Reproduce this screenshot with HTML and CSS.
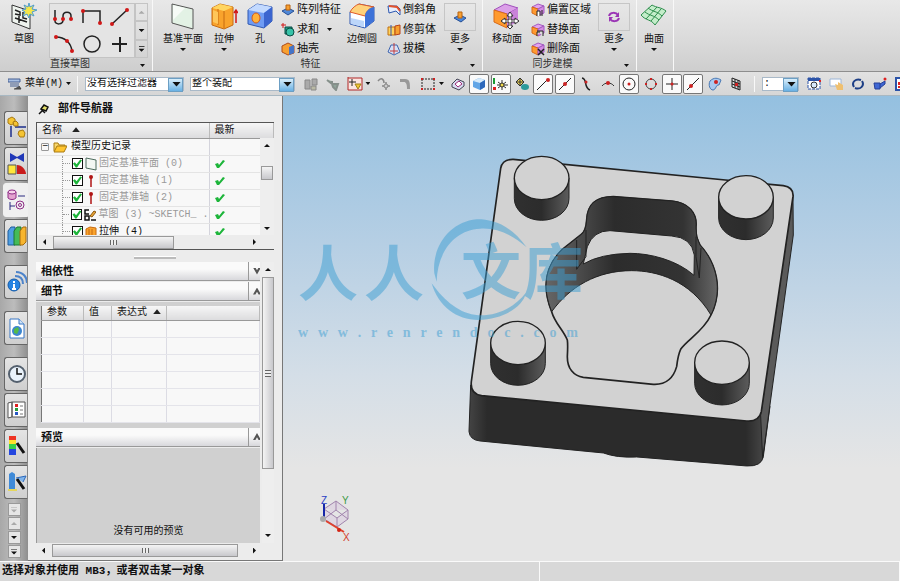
FILE: index.html
```html
<!DOCTYPE html>
<html lang="zh-CN">
  <head>
    <meta charset="UTF-8" />
    <meta name="viewport" content="width=device-width, initial-scale=1.0" />
    <title>部件导航器</title>
    <link rel="stylesheet" href="styles.css">
  </head>
  <body>
    <!-- shared shapes -->
    <svg class="defs" aria-hidden="true">
      <symbol id="tick" viewBox="0 0 12 10"><path d="M1 5l3-1 1 2 4-5 2 1-6 7H3z" fill="#1db53a" /></symbol>
      <symbol id="cube" viewBox="0 0 14 14">
        <path d="M1 4l6-3 6 2-6 3z" fill="#e3a3ee" stroke="#a25bc0" />
        <path d="M1 4l6 2v7l-6-3z" fill="#ff9a2e" stroke="#d76a18" />
        <path d="M7 6l6-3v7l-6 3z" fill="#d58be4" stroke="#a25bc0" />
      </symbol>
    </svg>

    <!-- Ribbon -->
    <header class="ribbon">
      <section class="group group-sketch">
        <div class="group-body">
          <button class="big">
            <svg width="26" height="27" viewBox="0 0 26 27"><path d="M1 2l18 6v18L1 19z" fill="#eef3ee" stroke="#333" /><path d="M4 7l5 2v3L4 11M12 9v6l4 1M4 15l12 4M8 13v7" fill="none" stroke="#222" stroke-width="1.5" /><path d="M18 0l1 4 4-2-2 4 5 1-5 2 2 4-4-2-1 4-2-4-4 2 2-4-3-2 4-1-2-4 4 2z" fill="#f4e64a" stroke="#4a9bd0" /></svg>
            <span>草图</span>
          </button>
          <div class="gallery">
            <button aria-label="轮廓"><svg width="22" height="20" viewBox="0 0 22 20"><path d="M2 3v11M2 14c0 4 8 4 8-1V9c0-5 8-5 8 0v4" fill="none" stroke="#222" stroke-width="1.5" /><g fill="#d01818"><circle cx="2" cy="12" r="2" /><circle cx="10" cy="12" r="2" /><circle cx="18" cy="12" r="2" /></g></svg></button>
            <button aria-label="矩形"><svg width="22" height="20" viewBox="0 0 22 20"><path d="M2 16V4h17v12" fill="none" stroke="#222" stroke-width="1.5" /><circle cx="2" cy="4" r="2" fill="#d01818" /><circle cx="19" cy="16" r="2" fill="#d01818" /></svg></button>
            <button aria-label="直线"><svg width="22" height="20" viewBox="0 0 22 20"><path d="M3 17L18 3" stroke="#222" stroke-width="1.5" /><circle cx="3" cy="17" r="2" fill="#d01818" /><circle cx="18" cy="3" r="2" fill="#d01818" /></svg></button>
            <button aria-label="圆弧"><svg width="22" height="20" viewBox="0 0 22 20"><path d="M3 3c9 0 15 6 16 14" fill="none" stroke="#222" stroke-width="1.5" /><g fill="#d01818"><circle cx="3" cy="3" r="2" /><circle cx="14" cy="7" r="2" /><circle cx="19" cy="17" r="2" /></g></svg></button>
            <button aria-label="圆"><svg width="22" height="20" viewBox="0 0 22 20"><circle cx="11" cy="10" r="8" fill="none" stroke="#222" stroke-width="1.5" /></svg></button>
            <button aria-label="点"><svg width="22" height="20" viewBox="0 0 22 20"><path d="M3 10h15M11 3v15" stroke="#222" stroke-width="2" /></svg></button>
          </div>
          <div class="gallery-scroll">
            <button aria-label="上" disabled><i class="caret up"></i></button>
            <button aria-label="下"><i class="caret"></i></button>
            <button aria-label="展开"><i class="caret bar"></i></button>
          </div>
        </div>
        <div class="caption">直接草图<i class="caret small"></i></div>
      </section>

      <section class="group group-feature">
        <div class="group-body">
          <button class="big wide">
            <svg width="24" height="27" viewBox="0 0 24 27"><path d="M1 1l21 5v20L1 20z" fill="#e3f2e5" stroke="#555" /><path d="M2 2l12 3-12 12z" fill="#fff" opacity=".7" /></svg>
            <span>基准平面</span><i class="caret"></i>
          </button>
          <button class="big">
            <svg width="28" height="27" viewBox="0 0 28 27"><path d="M2 5l8-4 13 3v18l-9 4-12-4z" fill="#f9a32c" stroke="#c66a10" /><path d="M2 5l8-4 13 3-9 4z" fill="#ffd560" /><path d="M14 8v17M8 6v16" stroke="#c66a10" /><path d="M3 7l5 2v12l-5-2z" fill="#ffc65a" /><path d="M26 7v13M24 10l2-3 2 3" stroke="#d01818" stroke-width="1.5" fill="none" /></svg>
            <span>拉伸</span><i class="caret"></i>
          </button>
          <button class="big">
            <svg width="26" height="27" viewBox="0 0 26 27"><path d="M1 7l9-6 15 3v14l-8 7-16-4z" fill="#6f9cf4" stroke="#3159b0" /><path d="M1 7l9-6 15 3-8 6z" fill="#c3daff" /><path d="M17 10l8-6v14l-8 7z" fill="#3b65cf" /><ellipse cx="9" cy="15" rx="4" ry="5" fill="#ffb13a" stroke="#d35a18" /></svg>
            <span>孔</span>
          </button>
          <div class="stack">
            <button><svg width="14" height="14" viewBox="0 0 14 14"><path d="M1 8l6-3 6 3-6 4z" fill="#5089d8" stroke="#274f94" /><path d="M5 2h4v5H5z" fill="#f7a030" stroke="#b86210" /></svg>阵列特征</button>
            <button><svg width="14" height="14" viewBox="0 0 14 14"><path d="M4 4h7v7H4z" fill="#1fa08b" stroke="#0c4d44" /><circle cx="9" cy="9" r="4" fill="#37c3a8" stroke="#0c4d44" /><path d="M0 2h5M2 0v5" stroke="#d01818" /></svg>求和<i class="caret small"></i></button>
            <button><svg width="14" height="14" viewBox="0 0 14 14"><path d="M1 4l6-3 6 3v7l-6 2-6-3z" fill="#f7a030" stroke="#b04a18" /><path d="M8 5l5-2v8l-5 2z" fill="#4474c8" /></svg>抽壳</button>
          </div>
          <button class="big">
            <svg width="28" height="27" viewBox="0 0 28 27"><path d="M2 9l9-8 15 3v14l-9 7-15-4z" fill="#fff" stroke="#2c57b0" /><path d="M2 9C4 5 8 2 11 1l15 3c-5 1-8 5-9 9z" fill="#ffd27a" stroke="#e05a28" /><path d="M17 12c1-4 4-7 9-8v14l-9 7z" fill="#3d72d8" /><path d="M3 15l13 3v6L3 21z" fill="#bcd6fa" /></svg>
            <span>边倒圆</span>
          </button>
          <div class="stack">
            <button><svg width="14" height="14" viewBox="0 0 14 14"><path d="M1 3h9l3 3v6l-4-4-7 2z" fill="#e7eefc" stroke="#2c57b0" /><path d="M2 3l8 1 3 4" stroke="#e2522b" stroke-width="2" fill="none" /></svg>倒斜角</button>
            <button><svg width="14" height="14" viewBox="0 0 14 14"><path d="M1 4h7v8H1z" fill="#ffd35c" stroke="#c07010" /><path d="M8 3l5-1v9l-5 1z" fill="#f7a030" stroke="#b84218" /><path d="M4 2v11" stroke="#3159b0" /></svg>修剪体</button>
            <button><svg width="14" height="14" viewBox="0 0 14 14"><path d="M4 3h6l3 7-6 3-6-3z" fill="#d5e1f7" stroke="#3c62ad" /><path d="M7 1v11M3 9h8" stroke="#c33a3a" /></svg>拔模</button>
          </div>
          <button class="big more">
            <span class="more-icon"><svg width="14" height="14" viewBox="0 0 14 14"><path d="M1 8l6-3 6 3-5 4z" fill="#4a86d8" stroke="#274f94" /><path d="M5 2h4v6H5z" fill="#f7a030" stroke="#b86210" /></svg></span>
            <span>更多</span><i class="caret"></i>
          </button>
        </div>
        <div class="caption center">特征<i class="caret small"></i></div>
      </section>

      <section class="group group-sync">
        <div class="group-body">
          <button class="big">
            <svg width="28" height="27" viewBox="0 0 28 27"><path d="M1 7l11-6 13 4-11 6z" fill="#dba0e8" stroke="#a04fbc" /><path d="M1 7l13 4v14L1 19z" fill="#ff9a2e" stroke="#d76a18" /><path d="M14 11l11-6v13l-11 7z" fill="#c982da" /><path d="M17 9l3 4h-2v4h4v-2l4 3-4 3v-2h-4v4h2l-3 3-3-3h2v-4h-4v2l-4-3 4-3v2h4v-4h-2z" fill="#fff" stroke="#333" /></svg>
            <span>移动面</span>
          </button>
          <div class="stack">
            <button><svg width="14" height="14" viewBox="0 0 14 14"><use href="#cube" /><path d="M6 13V8h3v5M11 7v6" stroke="#222" fill="#fff" /></svg>偏置区域</button>
            <button><svg width="14" height="14" viewBox="0 0 14 14"><use href="#cube" /><path d="M6 8h6v5M6 13V9h3" stroke="#222" fill="#ddd" /></svg>替换面</button>
            <button><svg width="14" height="14" viewBox="0 0 14 14"><use href="#cube" /><path d="M7 7l6 6M13 7l-6 6" stroke="#222" stroke-width="1.5" /></svg>删除面</button>
          </div>
          <button class="big more">
            <span class="more-icon"><svg width="14" height="14" viewBox="0 0 14 14"><path d="M2 6c1-4 7-4 9-1M12 8c-1 4-7 4-9 1" stroke="#9a35b5" stroke-width="2" fill="none" /><path d="M12 2v5H8zM2 12V7h4z" fill="#9a35b5" /></svg></span>
            <span>更多</span><i class="caret"></i>
          </button>
        </div>
        <div class="caption center">同步建模<i class="caret small"></i></div>
      </section>

      <section class="group group-surface">
        <div class="group-body">
          <button class="big">
            <svg width="28" height="27" viewBox="0 0 28 27"><path d="M1 12L12 2c5 3 9 2 14 6L15 22c-4-6-9-4-14-10z" fill="#c4edca" stroke="#2d8d4c" /><path d="M5 9c5 4 9 3 14 8M8 5c5 4 9 3 14 8M6 16L17 4M11 18L21 6" fill="none" stroke="#2d8d4c" /></svg>
            <span>曲面</span><i class="caret"></i>
          </button>
        </div>
      </section>
    </header>

    <!-- Selection bar -->
    <nav class="toolbar">
      <button class="menu-button">
        <svg width="14" height="14" viewBox="0 0 14 14"><path d="M0 2h12v3H0zM2 7h9M2 9h9" fill="#a9c0e4" stroke="#445f92" /><path d="M6 12h7l-2-3" fill="#555" stroke="#444" /></svg>
        菜单(M)<i class="caret small"></i>
      </button>
      <span class="divider"></span>
      <span class="combo"><select aria-label="选择过滤器"><option>没有选择过滤器</option></select></span>
      <span class="combo combo-scope"><select aria-label="选择范围"><option>整个装配</option></select></span>
      <div class="tools">
        <button aria-label="查找"><svg width="14" height="14" viewBox="0 0 14 14"><path d="M1 3h5v9H1zM8 2h5v6H8z" fill="#aaa" stroke="#888" /><path d="M7 9h5v4H7z" fill="#b9b9a4" stroke="#888" /></svg></button>
        <button aria-label="过滤"><svg width="14" height="14" viewBox="0 0 14 14"><path d="M1 3l5 4v-3M6 7h6l-2 6-3-3z" fill="#8fa59a" stroke="#86908b" stroke-width="2" /></svg></button>
        <button aria-label="捕捉"><svg width="16" height="14" viewBox="0 0 16 14"><path d="M1 0v13h14V1H1" fill="#fbe4e0" stroke="#b02828" /><path d="M2 5h7M5 2v7" stroke="#222" /><path d="M8 7h6l-3 5z" fill="#f2c432" stroke="#a08018" /></svg></button>
        <i class="caret small"></i>
        <button aria-label="移动"><svg width="14" height="14" viewBox="0 0 14 14"><path d="M1 4c3-4 6-2 6 2M5 9h8M9 5v8" fill="none" stroke="#888" stroke-width="1.5" /><circle cx="9" cy="9" r="2" fill="#ccc" stroke="#888" /></svg></button>
        <button aria-label="旋转"><svg width="14" height="14" viewBox="0 0 14 14"><path d="M1 2h5c5 0 5 4 5 10H8c0-5-1-7-3-7H1z" fill="#999" /></svg></button>
        <button aria-label="框选"><svg width="14" height="14" viewBox="0 0 14 14"><path d="M1 2h12v10H1z" fill="none" stroke="#222" stroke-dasharray="2 1" /><path d="M0 1h2v2H0zM12 1h2v2h-2zM0 11h2v2H0zM12 11h2v2h-2z" fill="#c22" /></svg></button>
        <i class="caret small"></i>
      </div>
      <div class="snap-tools">
        <button aria-label="线框"><svg width="14" height="14" viewBox="0 0 14 14"><path d="M1 7l5-5 7 3v4l-5 4-7-3z" fill="#d8dcf0" stroke="#445" /><path d="M4 7l4-3 3 3-4 3z" fill="#fff" stroke="#a02d7c" /></svg></button>
        <button class="on" aria-label="着色"><svg width="14" height="14" viewBox="0 0 14 14"><path d="M1 4l6-3 6 2v7l-5 3-7-3z" fill="#61a5e6" /><path d="M1 4l6-3 6 2-5 3z" fill="#d7ebfb" /><path d="M8 6l5-3v7l-5 3z" fill="#2c68bb" /></svg></button>
        <button class="on" aria-label="坐标"><svg width="16" height="14" viewBox="0 0 16 14"><path d="M1 1v6" stroke="#1a9b34" stroke-width="2" /><path d="M0 10h3v3H0z" fill="#d22" /><path d="M4 8h11M9 3v10M5 5l8 6M13 5l-8 6" stroke="#333" /><circle cx="9" cy="8" r="2" fill="#f4dc4c" stroke="#333" /></svg></button>
        <button aria-label="显示"><svg width="14" height="14" viewBox="0 0 14 14"><path d="M5 1l4 4-4 4-4-4z" fill="#f2d85b" stroke="#333" /><path d="M1 5h8M5 1v8" stroke="#333" /><ellipse cx="10" cy="10" rx="4" ry="3" fill="#2c9a9b" /></svg></button>
        <button class="on" aria-label="端点"><svg width="14" height="14" viewBox="0 0 14 14"><path d="M1 13L12 2" stroke="#222" /><circle cx="12" cy="3" r="2" fill="#c22" /></svg></button>
        <button class="on" aria-label="中点"><svg width="14" height="14" viewBox="0 0 14 14"><path d="M1 13L13 1" stroke="#222" /><circle cx="7" cy="7" r="2" fill="#c22" /></svg></button>
        <button aria-label="控制点"><svg width="14" height="14" viewBox="0 0 14 14"><path d="M3 1c6 1 1 9 8 12" fill="none" stroke="#222" stroke-width="1.5" /><circle cx="7" cy="5" r="1.5" fill="#c22" /></svg></button>
        <button aria-label="交点"><svg width="14" height="14" viewBox="0 0 14 14"><path d="M1 9c3-4 9-4 12 0" fill="none" stroke="#333" /><circle cx="7" cy="6" r="2" fill="#c22" /></svg></button>
        <button class="on" aria-label="圆心"><svg width="14" height="14" viewBox="0 0 14 14"><circle cx="7" cy="7" r="6" fill="none" stroke="#222" /><circle cx="7" cy="7" r="1.5" fill="#c22" /></svg></button>
        <button aria-label="象限点"><svg width="14" height="14" viewBox="0 0 14 14"><circle cx="7" cy="7" r="5" fill="none" stroke="#444" /><path d="M6 1h2v2H6zM6 11h2v2H6zM1 6h2v2H1zM11 6h2v2h-2z" fill="#c22" /></svg></button>
        <button class="on" aria-label="现有点"><svg width="14" height="14" viewBox="0 0 14 14"><path d="M1 7h12M7 1v12" stroke="#222" /><circle cx="7" cy="7" r="1.5" fill="#c22" /></svg></button>
        <button class="on" aria-label="曲线上的点"><svg width="14" height="14" viewBox="0 0 14 14"><path d="M1 13L13 1" stroke="#222" /><circle cx="5" cy="9" r="2" fill="#c22" /></svg></button>
        <button aria-label="面上的点"><svg width="14" height="14" viewBox="0 0 14 14"><path d="M2 4c4-4 8-3 11-1l-2 5c-3-1-3 5-6 5s-5-5-3-9z" fill="#a9c9ef" stroke="#4777b3" /><circle cx="8" cy="5" r="2" fill="#c22" /></svg></button>
        <button aria-label="网格点"><svg width="14" height="14" viewBox="0 0 14 14"><path d="M3 1l8 3v9l-8-3zM3 4l8 3M3 7l8 3M6 2v9M9 3v9" fill="none" stroke="#222" /><path d="M6 6h3v3H6z" fill="#c22" /></svg></button>
      </div>
      <span class="divider"></span>
      <span class="combo combo-short"><select aria-label="图层"><option>:</option></select></span>
      <div class="tools view-tools">
        <button aria-label="适合窗口"><svg width="14" height="14" viewBox="0 0 14 14"><path d="M1 1h12v11H1z" fill="#fff" stroke="#2b53a8" stroke-dasharray="3 1" /><path d="M1 1h12v3H1z" fill="#2b53a8" /><circle cx="7" cy="8" r="3" fill="#d7e8fa" stroke="#333" /><path d="M12 3h2v2h-2z" fill="#d22" /></svg></button>
        <button aria-label="平移"><svg width="14" height="14" viewBox="0 0 14 14"><path d="M1 2h11v7H1z" fill="#fff" stroke="#9cb6d8" /><path d="M6 7l3 1V5l5 3v5H8z" fill="#efc070" /></svg></button>
        <button aria-label="旋转视图"><svg width="14" height="14" viewBox="0 0 14 14"><path d="M3 10C0 5 5 1 10 3M11 4c3 5-2 9-7 7" stroke="#1d3f86" stroke-width="2" fill="none" /></svg></button>
        <button aria-label="透视"><svg width="14" height="14" viewBox="0 0 14 14"><path d="M1 6h6v6H2zM7 7l5-3v3l-5 4" fill="#3f67d4" stroke="#253f96" /><circle cx="12" cy="2" r="1.5" fill="#d22" /></svg></button>
        <button aria-label="布局"><svg width="14" height="14" viewBox="0 0 14 14"><path d="M1 1h12v12H1z" fill="#fff" stroke="#2b53a8" stroke-width="2" /><path d="M3 5h3v3H3zM3 9h3v2H3z" fill="#d22" /></svg></button>
      </div>
    </nav>

    <main class="workspace">
      <!-- Resource bar -->
      <aside class="rail">
        <button class="tab" aria-label="装配导航器"><svg width="20" height="24" viewBox="0 0 20 24"><path d="M4 10v11M8 11h11" stroke="#1c2f8c" stroke-width="1.5" /><g fill="#f5c433" stroke="#a87a12"><path d="M1 3l4-2 3 2v4l-4 2-3-2z" /><path d="M6 6l3-1 2 2v3H7z" /><path d="M12 15l4-1 2 3-1 4h-4l-2-3z" /></g></svg></button>
        <button class="tab" aria-label="约束导航器"><svg width="20" height="24" viewBox="0 0 20 24"><path d="M3 1l7 4 7-4v9l-7-4-7 4z" fill="#2038b8" /><path d="M1 13h8v9H1z" fill="#ffe63b" stroke="#555" /><path d="M10 13v9h9c0-4-4-9-9-9z" fill="#c91c1c" /></svg></button>
        <button class="tab active" aria-label="部件导航器"><svg width="20" height="24" viewBox="0 0 20 24"><path d="M2 4v6c2 2 6 2 8 0V4" fill="#e3a3cf" stroke="#8e2c86" /><ellipse cx="6" cy="4" rx="4" ry="2" fill="#f7d5ec" stroke="#8e2c86" /><path d="M12 8h7M4 14v8M4 18h5" stroke="#2b2b80" /><circle cx="14" cy="17" r="4" fill="none" stroke="#8e2c86" /><circle cx="14" cy="17" r="1.5" fill="none" stroke="#8e2c86" /></svg></button>
        <button class="tab gap-after" aria-label="重用库"><svg width="20" height="24" viewBox="0 0 20 24"><path d="M1 7l3-4h4v18H1z" fill="#4e9fe2" stroke="#205c9c" /><path d="M7 7l3-4h4v18H7z" fill="#45bb58" stroke="#1c7833" /><path d="M13 7l3-4h3v15l-3 3h-3z" fill="#f7b52f" stroke="#a56b0f" /></svg></button>
        <button class="tab gap-after" aria-label="HD3D 工具"><svg width="20" height="24" viewBox="0 0 20 24"><circle cx="7" cy="15" r="6" fill="#2684e2" stroke="#145aa8" /><path d="M7 11v2M7 14v5M5 19h4" stroke="#fff" stroke-width="2" /><path d="M8 6c5 0 8 3 8 8M9 2c7 0 11 5 11 11" fill="none" stroke="#4c83ca" stroke-width="2" /></svg></button>
        <button class="tab gap-after" aria-label="Web 浏览器"><svg width="20" height="24" viewBox="0 0 20 24"><path d="M3 3h9l5 5v14H3z" fill="#fff" stroke="#3a79c6" /><path d="M12 3v5h5" fill="#cfe3f7" stroke="#3a79c6" /><circle cx="10" cy="15" r="5" fill="#3c86cf" /><path d="M7 13l4-2 1 3-2 4-3-1z" fill="#53ba4a" /></svg></button>
        <button class="tab" aria-label="历史记录"><svg width="20" height="24" viewBox="0 0 20 24"><circle cx="10" cy="12" r="8" fill="#e9f2fb" stroke="#54606e" stroke-width="2" /><path d="M10 6v6h5" fill="none" stroke="#111" stroke-width="1.5" /></svg></button>
        <button class="tab" aria-label="角色"><svg width="20" height="24" viewBox="0 0 20 24"><path d="M1 5l4-1v15l-4 1zM5 4h13v15H5z" fill="#fff" stroke="#555" /><path d="M8 6h3v3H8z" fill="#d22" /><path d="M8 10h3v3H8z" fill="#2a9b3a" /><path d="M8 14h3v3H8z" fill="#2757c4" /><path d="M13 8h3M13 12h3M13 16h3" stroke="#777" /></svg></button>
        <button class="tab" aria-label="系统材料"><svg width="20" height="24" viewBox="0 0 20 24"><path d="M2 2h7v5H2z" fill="#ee3322" /><path d="M2 6h7v4H2z" fill="#ffe02c" /><path d="M2 10h7v5H2z" fill="#37d04a" /><path d="M2 15h7v6H2z" fill="#2446df" /><path d="M10 9l7 10" stroke="#111" stroke-width="3" /></svg></button>
        <button class="tab" aria-label="场景"><svg width="20" height="24" viewBox="0 0 20 24"><path d="M2 4l3-2 3 2v15H2z" fill="#3f8ad8" /><path d="M1 19h9v2H1z" fill="#e5d65c" /><path d="M9 8l10-2-3 6" fill="#80b5ec" stroke="#2c68bb" /><path d="M10 9l7 10" stroke="#111" stroke-width="3" /></svg></button>
        <div class="rail-scroll">
          <button aria-label="最前" disabled><i class="caret up bar"></i></button>
          <button aria-label="向上" disabled><i class="caret up"></i></button>
          <button aria-label="向下"><i class="caret"></i></button>
          <button aria-label="最后"><i class="caret bar"></i></button>
        </div>
      </aside>

      <!-- Part navigator -->
      <section class="navigator">
        <h1><svg width="12" height="12" viewBox="0 0 12 12"><path d="M3 6l3-4 4 2-2 4z" fill="#e6e06a" stroke="#111" stroke-width="1.5" /><path d="M3 6l4 4M4 8l-3 3" stroke="#111" stroke-width="1.5" /></svg>部件导航器</h1>

        <div class="tree-box">
          <div class="tree-view">
            <table class="tree">
              <thead>
                <tr><th>名称 <i class="sort"></i></th><th>最新</th></tr>
              </thead>
              <tbody>
                <tr class="root">
                  <td><div class="node"><span class="expander">−</span><svg width="14" height="12" viewBox="0 0 14 12"><path d="M1 10V2h4l1 2h6v3" fill="#f9d86c" stroke="#a87a12" /><path d="M1 11l3-6h10l-3 6z" fill="#ffc530" stroke="#a87a12" /></svg>模型历史记录</div></td>
                  <td></td>
                </tr>
                <tr>
                  <td><div class="node child"><input type="checkbox" id="n0" checked><svg width="12" height="14" viewBox="0 0 12 14"><path d="M1 1l10 2v10L1 11z" fill="#f3f7f3" stroke="#4c6b5c" /></svg><label for="n0">固定基准平面 (0)</label></div></td>
                  <td><svg class="tick"><use href="#tick" /></svg></td>
                </tr>
                <tr>
                  <td><div class="node child"><input type="checkbox" id="n1" checked><svg width="12" height="14" viewBox="0 0 12 14"><path d="M6 3v10" stroke="#b01515" stroke-width="1.5" /><circle cx="6" cy="3" r="2" fill="#b01515" /></svg><label for="n1">固定基准轴 (1)</label></div></td>
                  <td><svg class="tick"><use href="#tick" /></svg></td>
                </tr>
                <tr>
                  <td><div class="node child"><input type="checkbox" id="n2" checked><svg width="12" height="14" viewBox="0 0 12 14"><path d="M6 3v10" stroke="#b01515" stroke-width="1.5" /><circle cx="6" cy="3" r="2" fill="#b01515" /></svg><label for="n2">固定基准轴 (2)</label></div></td>
                  <td><svg class="tick"><use href="#tick" /></svg></td>
                </tr>
                <tr>
                  <td><div class="node child"><input type="checkbox" id="n3" checked><svg width="12" height="14" viewBox="0 0 12 14"><path d="M5 2H1v4h4M1 8h4v4H1zM7 12h5" fill="none" stroke="#111" stroke-width="1.5" /><path d="M6 8l4-5 2 1-4 5z" fill="#eda633" stroke="#87560d" /></svg><label for="n3">草图 (3) ~SKETCH_ .</label></div></td>
                  <td><svg class="tick"><use href="#tick" /></svg></td>
                </tr>
                <tr class="current">
                  <td><div class="node child"><input type="checkbox" id="n4" checked><svg width="12" height="14" viewBox="0 0 12 14"><path d="M1 4l4-2 6 1v9l-4 1-6-1z" fill="#f9a32c" stroke="#c66a10" /><path d="M4 4v8M7 4v9" stroke="#c66a10" /></svg><label for="n4">拉伸 (4)</label></div></td>
                  <td><svg class="tick"><use href="#tick" /></svg></td>
                </tr>
              </tbody>
            </table>
            <div class="vbar tree-vbar">
              <i class="caret up"></i><span class="thumb"></span><i class="caret"></i>
            </div>
          </div>
          <div class="hbar">
            <i class="caret left"></i><span class="thumb"><i class="grip"></i></span><i class="caret right"></i>
          </div>
        </div>

        <div class="splitter"></div>

        <div class="details">
          <div class="sections">
            <h2>相依性<button aria-label="展开相依性"><i class="chevron down"></i></button></h2>
            <h2>细节<button aria-label="折叠细节"><i class="chevron"></i></button></h2>
            <div class="params-box">
              <table class="params">
                <thead>
                  <tr><th>参数</th><th>值</th><th>表达式 <i class="sort"></i></th><th></th></tr>
                </thead>
                <tbody>
                  <tr><td></td><td></td><td></td><td></td></tr>
                  <tr><td></td><td></td><td></td><td></td></tr>
                  <tr><td></td><td></td><td></td><td></td></tr>
                  <tr><td></td><td></td><td></td><td></td></tr>
                  <tr><td></td><td></td><td></td><td></td></tr>
                  <tr><td></td><td></td><td></td><td></td></tr>
                </tbody>
              </table>
            </div>
            <h2>预览<button aria-label="折叠预览"><i class="chevron"></i></button></h2>
            <div class="preview">没有可用的预览</div>
          </div>
          <div class="vbar details-vbar">
            <i class="caret up"></i><span class="thumb"><i class="grip"></i></span><i class="caret"></i>
          </div>
        </div>
        <div class="hbar wide">
          <i class="caret left"></i><span class="thumb"><i class="grip"></i></span><i class="caret right"></i>
        </div>
      </section>

      <!-- Graphics window -->
      <section class="canvas">
        <svg class="model" width="617" height="465" viewBox="283 96 617 465">
          <defs>
            <linearGradient id="side"><stop offset="0" stop-color="#303030" /><stop offset=".5" stop-color="#2c2c2c" /><stop offset="1" stop-color="#5c5c5c" /></linearGradient>
            <linearGradient id="wall"><stop offset="0" stop-color="#666" /><stop offset=".2" stop-color="#4a4a4a" /><stop offset=".4" stop-color="#2c2c2c" /><stop offset=".8" stop-color="#333" /><stop offset="1" stop-color="#666" /></linearGradient>
            <linearGradient id="front"><stop offset="0" stop-color="#444" /><stop offset=".06" stop-color="#2b2b2b" /><stop offset=".92" stop-color="#2b2b2b" /><stop offset="1" stop-color="#505050" /></linearGradient>
            <g id="boss">
              <path d="M-82 0v62a82 65 0 0 0 164 0V0z" fill="url(#side)" stroke="#222" stroke-width="3" />
              <ellipse rx="82" ry="65" fill="#d2d2d2" stroke="#222" stroke-width="4" />
            </g>
          </defs>
          <g transform="translate(450 140) scale(.3333)" stroke-linejoin="round">
            <path d="M62 735L57 875Q60 900 90 903L460 939Q500 954 560 951L890 978Q935 980 940 950L960 800 900 700z" fill="url(#front)" stroke="#222" stroke-width="3" />
            <path d="M932 826L938 955 1030 285 1029 165z" fill="#5a5a5a" stroke="#222" stroke-width="3" />
            <path d="M152 85Q157 57 190 58L1000 137Q1032 142 1029 170L934 815Q927 846 890 843L95 767Q60 762 64 725z" fill="#d2d2d2" stroke="#222" stroke-width="5" />
            <path d="M305 515C275 440 285 380 335 330L392 285Q408 275 410 240C412 195 435 170 490 170L665 183C715 187 742 220 738 260Q736 290 750 315C800 370 820 450 783 525C760 575 710 600 692 628Q684 645 680 680C670 715 650 735 610 733L400 712C370 708 352 685 352 650Q354 615 352 600C340 570 315 550 305 515z" fill="#d2d2d2" stroke="#222" stroke-width="5" />
            <path d="M305 515C275 440 285 380 335 330L392 285Q408 275 410 240C412 195 435 170 490 170L665 183C715 187 742 220 738 260Q736 290 750 315C800 370 820 450 783 525C720 420 620 392 545 392C440 392 360 440 305 515z" fill="url(#wall)" stroke="#222" stroke-width="3" />
            <path d="M400 372L412 320Q430 272 480 272L665 288Q725 292 733 345L732 406C680 360 600 340 540 340Q450 342 400 372z" fill="#d2d2d2" stroke="#222" stroke-width="3" />
            <path d="M408 270v80L380 388V300M738 290v60l10 64 5-90" fill="none" stroke="#222" stroke-width="3" />
            <use href="#boss" x="275" y="114" />
            <use href="#boss" x="888" y="172" />
            <use href="#boss" x="204" y="609" />
            <use href="#boss" x="816" y="668" />
          </g>

          <!-- view triad -->
          <g fill="none">
            <path d="M324 509l12-8 12 9v9l-11 8-13-8zM324 509l13 9 11-8M337 518v9M336 501v9l-12 9M336 510l12 9" fill="#d9c9df" fill-opacity=".5" stroke="#a184ad" />
            <path d="M324 519v-15" stroke="#1727a8" stroke-width="2" />
            <path d="M326 521l18 11" stroke="#e0402c" stroke-width="2" />
            <circle cx="323" cy="519" r="3" fill="#aaa" />
            <circle cx="339" cy="530" r="2" fill="#d42414" />
          </g>
          <g class="axis">
            <text x="321" y="504" fill="#2b3fc4">Z</text>
            <text x="342" y="504" fill="#3d9a45">Y</text>
            <text x="343" y="541" fill="#d2402c">X</text>
          </g>

          <g class="watermark">
            <text x="298" y="296">人</text>
            <text x="364" y="296">人</text>
            <text x="461" y="294">文</text>
            <text x="523" y="294">库</text>
            <path transform="translate(290 210) scale(.3333)" d="M710 112C660 40 600 27 560 28C480 35 425 110 433 190L440 215C442 130 490 60 570 56C620 52 670 75 710 112zM425 220C445 290 500 330 565 330C640 328 700 290 708 248C670 295 620 318 565 316C510 312 465 275 425 220z" />
          </g>
        </svg>
        <p class="watermark-url">w w w . r e n r e n d o c . c o m</p>
      </section>
    </main>

    <footer class="status">
      <div>选择对象并使用 MB3，或者双击某一对象</div>
      <div></div>
    </footer>
  </body>
</html>
```

FILE: styles.css
```css
* {
  box-sizing: border-box;
}

body {
  margin: 0;
  min-height: 100vh;
  display: flex;
  flex-direction: column;
  overflow: hidden;
  background-color: #dcdcdc;
  color: #111;
  font-family: "Liberation Mono", "Noto Sans CJK SC", monospace;
  font-size: 10px;
  line-height: 12px;
}

button {
  margin: 0;
  padding: 0;
  border: none;
  background: none;
  color: inherit;
  font: inherit;
  cursor: pointer;
}

svg {
  display: block;
  flex: none;
}

.defs {
  position: absolute;
  width: 0;
  height: 0;
}

/* Arrows */
.caret {
  flex: none;
  display: block;
  width: 6px;
  height: 3px;
  background-color: #111;
  clip-path: polygon(0 0, 100% 0, 50% 100%);
}

.caret.small {
  width: 5px;
  height: 3px;
}

.caret.up {
  clip-path: polygon(50% 0, 100% 100%, 0 100%);
}

.caret.bar {
  height: 6px;
  clip-path: polygon(0 0, 100% 0, 100% 17%, 0 17%, 0 50%, 100% 50%, 50% 100%, 0 50%);
}

.caret.left {
  width: 3px;
  height: 6px;
  clip-path: polygon(0 50%, 100% 0, 100% 100%);
}

.caret.right {
  width: 3px;
  height: 6px;
  clip-path: polygon(0 0, 100% 50%, 0 100%);
}

button:disabled .caret {
  background-color: #aaa;
}

/* Ribbon */
.ribbon {
  display: flex;
  height: 72px;
  background: linear-gradient(#e8e8e8, #dcdcdc 50%, #cecece);
  border-bottom: 1px solid #8e8e8e;
}

.group {
  display: flex;
  flex-direction: column;
  justify-content: space-between;
  padding-top: 3px;
  border-right: 1px solid #f8f8f8;
}

.group-sketch {
  width: 153px;
}

.group-feature {
  width: 330px;
}

.group-sync {
  width: 154px;
}

.group-surface {
  width: 37px;
}

.group-body {
  display: flex;
  gap: 2px;
  height: 55px;
}

.group-sketch .group-body {
  gap: 0;
  padding-left: 7px;
}

.group-feature .group-body {
  padding-left: 8px;
}

.group-sync .group-body {
  padding-left: 7px;
}

.big {
  width: 34px;
  display: flex;
  flex-direction: column;
  align-items: center;
  white-space: nowrap;
}

.big.wide {
  width: 44px;
}

.big span {
  margin-top: 4px;
}

.big .caret {
  margin-top: 2px;
}

.big .more-icon {
  display: flex;
  justify-content: center;
  align-items: center;
  width: 32px;
  height: 28px;
  margin-top: 0;
  border: 1px solid #c6c6c6;
}

.big .more-icon + span {
  margin-top: 3px;
}

.gallery {
  display: grid;
  grid-template-columns: repeat(3, 28px);
  margin-left: 8px;
  background-color: #e4e4e4;
  border: 1px solid #c4c4c4;
}

.gallery button {
  display: flex;
  justify-content: center;
  align-items: center;
}

.gallery-scroll {
  width: 13px;
  display: flex;
  flex-direction: column;
}

.gallery-scroll button {
  flex: 1;
  display: flex;
  justify-content: center;
  align-items: center;
  border: 1px solid #c4c4c4;
}

.stack {
  display: flex;
  flex-direction: column;
  justify-content: space-between;
  height: 53px;
  margin: 0 2px;
  font-size: 11px;
}

.stack button {
  display: flex;
  align-items: center;
  gap: 2px;
  white-space: nowrap;
}

.stack .caret {
  margin-left: 6px;
}

.group-feature .stack {
  width: 60px;
}

.group-feature .stack ~ .stack {
  width: 52px;
  margin-left: 6px;
}

.group-sync .stack {
  width: 62px;
  margin-left: 5px;
}

.caption {
  position: relative;
  padding: 0 50px;
  color: #333;
  white-space: nowrap;
}

.caption.center {
  padding: 0 14px 0 0;
  text-align: center;
}

.caption .caret {
  position: absolute;
  right: 7px;
  bottom: 4px;
}

/* Selection bar */
.toolbar {
  display: flex;
  align-items: center;
  height: 24px;
  padding-left: 8px;
  background: linear-gradient(#e2e2e2, #d6d6d6);
  border-bottom: 1px solid #a8b8c2;
  overflow: hidden;
}

.toolbar > * {
  flex: none;
}

.menu-button {
  display: flex;
  align-items: center;
  gap: 3px;
  width: 62px;
  white-space: nowrap;
}

.divider {
  width: 1px;
  height: 16px;
  margin: 0 7px;
  background-color: #f8f8f8;
}

.combo {
  position: relative;
  width: 99px;
  height: 14px;
}

.combo-scope {
  width: 105px;
  margin-left: 6px;
}

.combo-short {
  width: 37px;
}

.combo select {
  display: block;
  width: 100%;
  height: 14px;
  padding: 0 14px 0 1px;
  border: 1px solid #a9b9c8;
  border-radius: 0;
  background-color: #fff;
  color: #111;
  font: inherit;
  line-height: 12px;
  appearance: none;
}

.combo::before {
  content: "";
  position: absolute;
  top: 1px;
  right: 1px;
  width: 13px;
  height: 12px;
  background: linear-gradient(#d9eefb, #69b1e4);
  border: 1px solid #6c9fc4;
  pointer-events: none;
}

.combo::after {
  content: "";
  position: absolute;
  top: 5px;
  right: 3px;
  width: 9px;
  height: 5px;
  background-color: #111;
  clip-path: polygon(0 0, 100% 0, 50% 100%);
  pointer-events: none;
}

.tools {
  display: flex;
  align-items: center;
  width: 147px;
  margin-left: 5px;
}

.tools button {
  display: flex;
  justify-content: center;
  width: 22px;
}

.tools .caret {
  margin-right: 3px;
}

.snap-tools {
  display: grid;
  grid-template-columns: repeat(14, 1fr);
  width: 300px;
  justify-items: center;
}

.snap-tools button {
  display: flex;
  justify-content: center;
  align-items: center;
  width: 20px;
  height: 20px;
}

.snap-tools .on {
  background-color: #fafafa;
  border: 1px solid #777;
  border-radius: 2px;
}

.view-tools {
  margin-left: 4px;
}

/* Workspace */
.workspace {
  flex: 1;
  display: flex;
}

.rail {
  width: 28px;
  display: flex;
  flex-direction: column;
  align-items: flex-end;
  gap: 2px;
  padding-top: 15px;
  background: linear-gradient(to right, #a8a8a8, #bcbcbc 50%, #8e8e8e);
}

.tab {
  flex: none;
  display: flex;
  align-items: center;
  width: 24px;
  height: 34px;
  padding-left: 2px;
  background: linear-gradient(#e4e4e4, #cfcfcf);
  border: 1px solid #666;
  border-right-color: #888;
  border-radius: 3px 0 0 3px;
  overflow: hidden;
}

.tab.active {
  width: 25px;
  background: #f0f0f0;
  border-color: #f0f0f0;
}

.tab.gap-after {
  margin-bottom: 10px;
}

.rail-scroll {
  align-self: center;
  display: flex;
  flex-direction: column;
  gap: 1px;
  margin-top: 2px;
}

.rail-scroll button {
  display: flex;
  justify-content: center;
  align-items: center;
  width: 13px;
  height: 13px;
  background-color: #e6e6e6;
  border: 1px solid #999;
}

/* Part navigator */
.navigator {
  width: 255px;
  display: flex;
  flex-direction: column;
  padding: 5px 8px 2px;
  background-color: #ececec;
  border-right: 1px solid #777;
  border-bottom: 1px solid #777;
}

.navigator h1 {
  display: flex;
  align-items: center;
  gap: 8px;
  height: 16px;
  margin: 0 0 5px 2px;
  font-size: 11px;
  line-height: 16px;
}

.tree-box {
  border: 1px solid #555;
  border-right: none;
  background-color: #f8f8f8;
}

.tree-view {
  position: relative;
  height: 112px;
  overflow: hidden;
}

.tree,
.params {
  width: 100%;
  border-collapse: collapse;
  table-layout: fixed;
}

th {
  text-align: left;
  font-weight: normal;
  white-space: nowrap;
  background: linear-gradient(#f6f6f6, #dcdcde);
  border-bottom: 1px solid #999;
  border-right: 1px solid #bbb;
}

.tree th {
  height: 15px;
  padding: 2px 0 0 5px;
}

.tree th:first-child {
  width: 172px;
}

.tree td {
  height: 17px;
  padding: 0;
  border-bottom: 1px solid #e4e4e4;
  border-right: 1px solid #d4d4dc;
}

.sort {
  display: inline-block;
  width: 8px;
  height: 5px;
  margin: 0 0 1px 4px;
  background-color: #222;
  clip-path: polygon(50% 0, 100% 100%, 0 100%);
}

.node {
  display: flex;
  align-items: center;
  gap: 2px;
  height: 16px;
  padding-left: 4px;
  white-space: nowrap;
  overflow: hidden;
}

.root .node {
  gap: 4px;
}

.node.child {
  margin-left: 25px;
  padding-left: 0;
  border-left: 1px dotted #999;
  color: #9a9a9a;
}

.node.child::before {
  content: "";
  width: 7px;
  border-top: 1px dotted #999;
}

.current .node.child {
  color: #111;
}

.expander {
  width: 8px;
  height: 8px;
  border: 1px solid #999;
  border-radius: 1px;
  line-height: 6px;
  text-align: center;
}

.node input {
  flex: none;
  width: 11px;
  height: 11px;
  margin: 0;
  border: 1px solid #111;
  background-color: #fff;
  appearance: none;
}

.node input:checked::before {
  content: "";
  display: block;
  width: 9px;
  height: 9px;
  background-color: #1db53a;
  clip-path: polygon(0 50%, 20% 35%, 40% 58%, 80% 5%, 100% 15%, 45% 95%, 30% 95%);
}

.tick {
  width: 12px;
  height: 10px;
  margin-left: 4px;
}

/* Scrollbars */
.vbar {
  display: flex;
  flex-direction: column;
  align-items: center;
  width: 12px;
  background-color: #eee;
}

.hbar {
  display: flex;
  align-items: center;
  gap: 7px;
  height: 14px;
  padding: 0 18px 0 6px;
  background-color: #ececec;
}

.thumb {
  display: flex;
  justify-content: center;
  align-items: center;
  background: linear-gradient(#f4f4f4, #c8c8cc);
  border: 1px solid #999;
}

.hbar .thumb {
  width: 121px;
  height: 13px;
}

.hbar .right {
  margin-left: auto;
}

.hbar.wide {
  height: 15px;
}

.hbar.wide .thumb {
  width: 186px;
}

.hbar .grip {
  width: 7px;
  height: 5px;
  background: repeating-linear-gradient(to right, #666 0 1px, #eee 1px 3px);
}

.tree-vbar {
  position: absolute;
  top: 15px;
  right: 0;
  bottom: 0;
  width: 14px;
  padding: 6px 0 5px;
  justify-content: space-between;
}

.tree-vbar .thumb {
  width: 12px;
  height: 14px;
  margin-bottom: 28px;
}

.splitter {
  width: 42px;
  height: 3px;
  margin: 6px auto 3px;
  background-color: #bbb;
  border-top: 1px solid #fff;
}

.details {
  flex: 1;
  display: flex;
  gap: 2px;
}

.sections {
  flex: 1;
  display: flex;
  flex-direction: column;
}

.details-vbar {
  padding: 6px 0;
}

.details-vbar .thumb {
  width: 12px;
  height: 192px;
  margin: 6px 0 auto;
  background: linear-gradient(to right, #f4f4f4, #c8c8cc);
}

.details-vbar .grip {
  width: 6px;
  height: 7px;
  background: repeating-linear-gradient(#666 0 1px, #eee 1px 3px);
}

.sections h2 {
  display: flex;
  justify-content: space-between;
  height: 19px;
  margin: 0 0 1px;
  padding-left: 5px;
  background: linear-gradient(#fafafa 40%, #d8d8dc);
  border-bottom: 1px solid #999;
  font-size: 11px;
  line-height: 20px;
}

.sections h2 button {
  display: flex;
  align-items: center;
  width: 12px;
  padding-left: 4px;
  border-left: 1px solid #999;
  overflow: hidden;
}

.chevron {
  flex: none;
  width: 8px;
  height: 7px;
  background-color: #555;
  clip-path: polygon(0 100%, 50% 0, 100% 100%, 70% 100%, 50% 60%, 30% 100%);
}

.chevron.down {
  clip-path: polygon(0 0, 30% 0, 50% 40%, 70% 0, 100% 0, 50% 100%);
}

.params-box {
  padding: 4px 0 5px 5px;
  background-color: #d0d0d0;
}

.params {
  background-color: #f8f8f8;
  border-left: 1px solid #777;
  border-bottom: 1px solid #777;
}

.params th {
  height: 14px;
  padding: 1px 0 0 5px;
}

.params th:nth-child(1) {
  width: 42px;
}

.params th:nth-child(2) {
  width: 28px;
}

.params th:nth-child(3) {
  width: 55px;
}

.params .sort {
  margin-left: 0;
}

.params td {
  height: 17px;
  padding: 0;
  border-bottom: 1px solid #e4e4ea;
  border-right: 1px solid #dcdce4;
}

.preview {
  flex: 1;
  display: flex;
  justify-content: center;
  align-items: flex-end;
  min-height: 80px;
  padding-bottom: 5px;
  background-color: #d0d0d0;
  border-left: 1px solid #999;
}

/* Graphics window */
.canvas {
  position: relative;
  flex: 1;
  overflow: hidden;
  background: linear-gradient(#94c0e0, #b6cfe4 32%, #d4dee7 60%, #e5e5e5 80%);
}

.model {
  position: absolute;
  top: 0;
  left: 0;
}

.axis {
  font-family: "Liberation Sans", sans-serif;
  font-size: 10px;
}

.watermark {
  fill: #3d9fd3;
  opacity: 0.5;
  font-family: "Noto Sans CJK SC", sans-serif;
  font-size: 60px;
  font-weight: bold;
}

.watermark-url {
  position: absolute;
  top: 229px;
  left: 15px;
  width: 280px;
  margin: 0;
  color: #3d9fd3;
  opacity: 0.5;
  font-family: "Liberation Serif", serif;
  font-size: 14px;
  font-weight: bold;
  line-height: 16px;
  text-align-last: justify;
}

/* Status bar */
.status {
  display: grid;
  grid-template-columns: 3fr 2fr;
  height: 20px;
  background-color: #d8d8d8;
  border-top: 1px solid #fafafa;
  font-size: 11px;
  font-weight: bold;
  line-height: 19px;
}

.status div {
  padding-left: 2px;
  border-right: 1px solid #fafafa;
}
```
